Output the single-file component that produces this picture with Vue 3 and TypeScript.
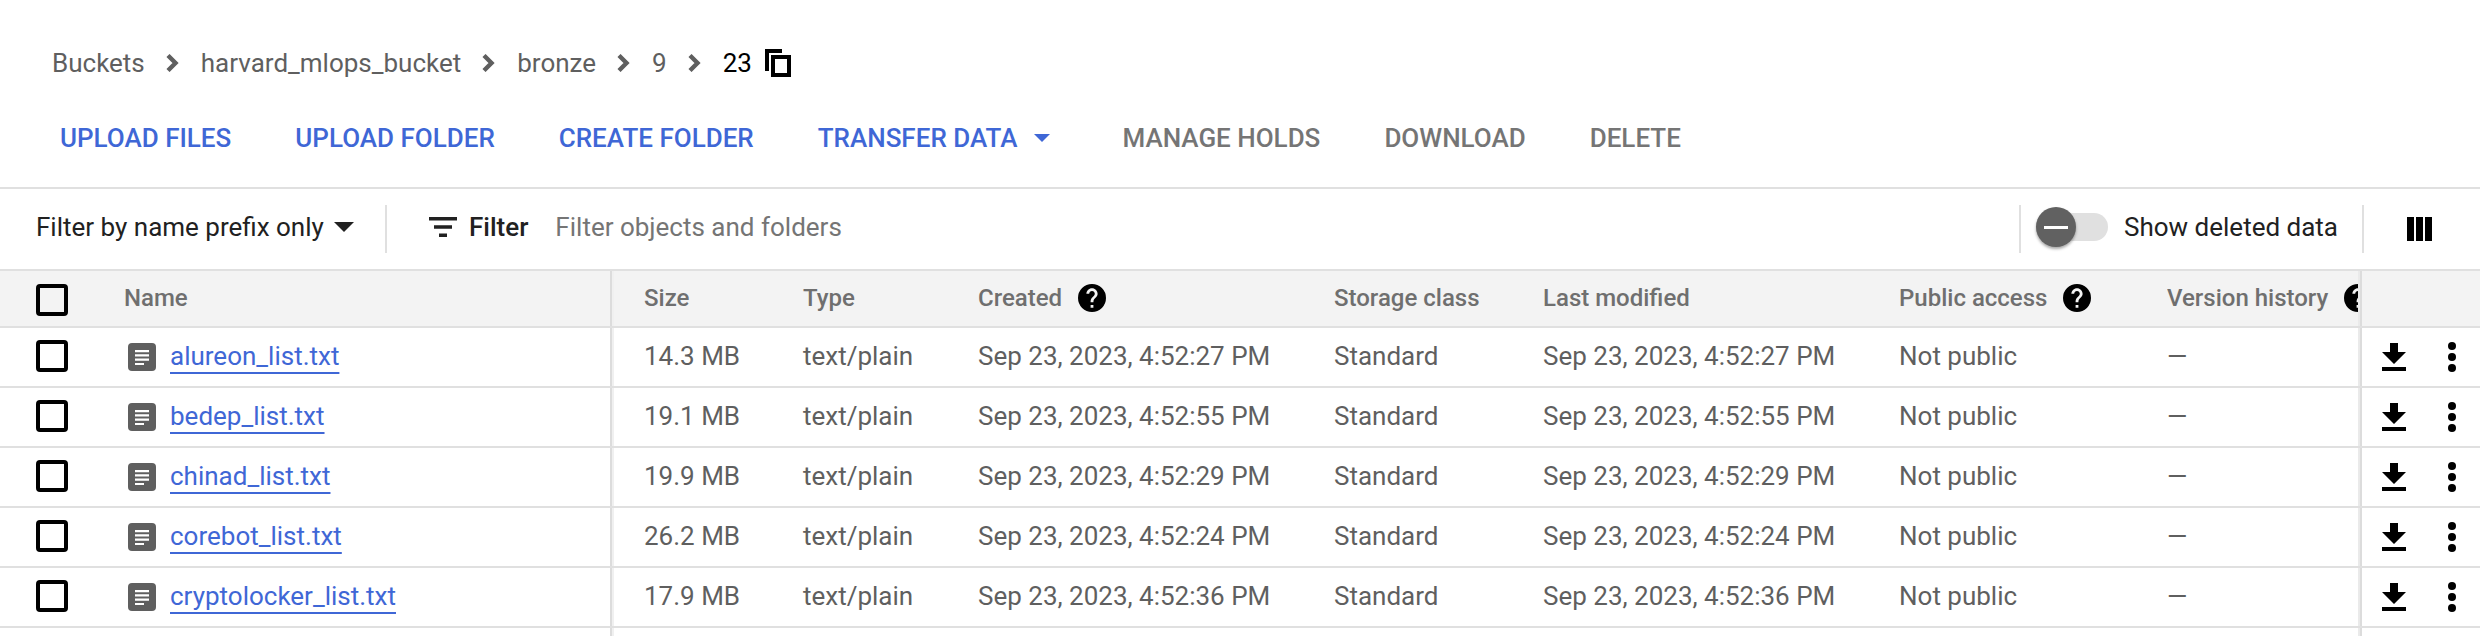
<script setup lang="ts">
interface FileRow { name: string; size: string; date: string }
const rows: FileRow[] = [
  { name: 'alureon_list.txt', size: '14.3 MB', date: 'Sep 23, 2023, 4:52:27 PM' },
  { name: 'bedep_list.txt', size: '19.1 MB', date: 'Sep 23, 2023, 4:52:55 PM' },
  { name: 'chinad_list.txt', size: '19.9 MB', date: 'Sep 23, 2023, 4:52:29 PM' },
  { name: 'corebot_list.txt', size: '26.2 MB', date: 'Sep 23, 2023, 4:52:24 PM' },
  { name: 'cryptolocker_list.txt', size: '17.9 MB', date: 'Sep 23, 2023, 4:52:36 PM' },
]
const crumbs = ['Buckets', 'harvard_mlops_bucket', 'bronze', '9']
const helpPath = 'M12 2a10 10 0 1 0 0 20 10 10 0 0 0 0-20zm1 17h-2v-2h2v2zm2.07-7.75-.9.92C13.45 12.9 13 13.5 13 15h-2v-.5c0-1.1.45-2.1 1.17-2.83l1.24-1.26c.37-.36.59-.86.59-1.41 0-1.1-.9-2-2-2s-2 .9-2 2H8c0-2.21 1.79-4 4-4s4 1.79 4 4c0 .88-.36 1.68-.93 2.25z'
</script>

<template>
  <div class="page">
    <nav class="crumbs">
      <template v-for="c in crumbs" :key="c">
        <span class="crumb">{{ c }}</span>
        <svg class="chev" viewBox="0 0 14 18"><path d="M3 1.500 10.500 9 3 16.500" fill="none" stroke="#5f5f5f" stroke-width="4.400" /></svg>
      </template>
      <span class="crumb current">23</span>
      <svg class="copy" viewBox="0 0 26 28"><path d="M2 22V2h15M8 8h16v18H8z" fill="none" stroke="#000" stroke-width="4" /></svg>
    </nav>

    <div class="actions">
      <button class="act blue">UPLOAD FILES</button>
      <button class="act blue">UPLOAD FOLDER</button>
      <button class="act blue">CREATE FOLDER</button>
      <button class="act blue transfer">TRANSFER DATA<span class="caret"></span></button>
      <button class="act grey manage">MANAGE HOLDS</button>
      <button class="act grey">DOWNLOAD</button>
      <button class="act grey">DELETE</button>
    </div>

    <div class="filters">
      <div class="prefix">Filter by name prefix only<span class="caret dark"></span></div>
      <div class="filter-main">
        <svg class="filter-ic" viewBox="0 0 28 20"><path d="M0 0h28v3.400H0zM5 8.300h18v3.400H5zM10 16.600h8V20h-8z" fill="#212121" /></svg>
        <strong>Filter</strong>
        <span class="placeholder">Filter objects and folders</span>
      </div>
      <div class="deleted">
        <span class="track"><span class="knob"><i></i></span></span>
        <span>Show deleted data</span>
      </div>
      <div class="col-btn">
        <svg viewBox="0 0 25 24"><path d="M0 0h7v24H0zM9 0h7v24H9zM18 0h7v24h-7z" fill="#000" /></svg>
      </div>
    </div>

    <div class="table">
      <div class="row head">
        <div class="cell check"><span class="box"></span></div>
        <div class="cell">Name</div>
        <div class="cell sep">Size</div>
        <div class="cell">Type</div>
        <div class="cell">Created<svg class="help" viewBox="2 2 20 20"><path :d="helpPath" fill="#000" /></svg></div>
        <div class="cell">Storage class</div>
        <div class="cell">Last modified</div>
        <div class="cell">Public access<svg class="help" viewBox="2 2 20 20"><path :d="helpPath" fill="#000" /></svg></div>
        <div class="cell clip">Version history<svg class="help" viewBox="2 2 20 20"><path :d="helpPath" fill="#000" /></svg></div>
        <div class="cell stick"></div>
      </div>
      <div v-for="r in rows" :key="r.name" class="row">
        <div class="cell check"><span class="box"></span></div>
        <div class="cell file">
          <svg class="doc" viewBox="0 0 28 28"><rect width="28" height="28" rx="4" fill="#5f5f5f" /><path d="M7 7h14v2.200H7zM7 11.300h14v2.200H7zM7 15.600h14v2.200H7zM7 19.900h9v2.200H7z" fill="#fff" /></svg>
          <a class="link">{{ r.name }}</a>
        </div>
        <div class="cell sep">{{ r.size }}</div>
        <div class="cell">text/plain</div>
        <div class="cell">{{ r.date }}</div>
        <div class="cell">Standard</div>
        <div class="cell">{{ r.date }}</div>
        <div class="cell">Not public</div>
        <div class="cell">—</div>
        <div class="cell stick tools">
          <svg class="dl" viewBox="0 0 24 28"><path d="M8 0h8v9h8L12 21 0 9h8zM0 24h24v4H0z" fill="#000" /></svg>
          <svg class="dots" viewBox="0 0 8 30"><circle cx="4" cy="4" r="4" /><circle cx="4" cy="15" r="4" /><circle cx="4" cy="26" r="4" /></svg>
        </div>
      </div>
      <div class="row blank">
        <div class="cell"></div><div class="cell"></div><div class="cell sep"></div><div class="cell"></div><div class="cell"></div><div class="cell"></div><div class="cell"></div><div class="cell"></div><div class="cell"></div><div class="cell stick"></div>
      </div>
    </div>
  </div>
</template>

<style scoped>
.page { width: 2480px; height: 636px; overflow: hidden; background: #fff; font-family: Roboto, "Liberation Sans", sans-serif; font-size: 26px; color: #5f5f5f; }
.crumbs { height: 112px; padding: 14px 0 0 52px; box-sizing: border-box; display: flex; align-items: center; }
.crumb { color: #5f5f5f; }
.current { color: #000; }
.chev { width: 14px; height: 18px; margin: 0 22px 0 20px; flex: none; }
.copy { width: 26px; height: 28px; margin-left: 13px; flex: none; }
.actions { height: 77px; padding: 0 0 24px 60px; box-sizing: border-box; display: flex; align-items: center; gap: 64px; border-bottom: 2px solid #e0e0e0; }
.act { border: 0; background: none; padding: 0; font: 500 26px Roboto, sans-serif; display: flex; align-items: center; }
.blue { color: #3f67d6; }
.grey { color: #757575; }
.caret { width: 0; height: 0; border-left: 8px solid transparent; border-right: 8px solid transparent; border-top: 8px solid #3f67d6; margin-left: 17px; }
.caret.dark { border-left-width: 10px; border-right-width: 10px; border-top: 10px solid #212121; margin-left: 10px; }
.manage { margin-left: 8px; }
.filters { height: 80px; display: flex; align-items: center; color: #000; }
.prefix { display: flex; align-items: center; width: 387px; height: 48px; padding: 0 0 4px 36px; box-sizing: border-box; border-right: 2px solid #e0e0e0; color: #212121; }
.filter-main { display: flex; align-items: center; flex: 1; padding: 0 0 4px 42px; }
.filter-ic { width: 28px; height: 20px; margin-right: 12px; }
.filter-main strong { font-weight: 500; color: #212121; }
.placeholder { color: #757575; margin-left: 27px; }
.deleted { width: 343px; height: 48px; box-sizing: border-box; display: flex; align-items: center; padding: 0 0 4px 15px; border-left: 2px solid #e0e0e0; gap: 16px; color: #212121; }
.track { width: 72px; height: 28px; border-radius: 14px; background: #e0e0e0; position: relative; flex: none; }
.knob { position: absolute; left: 0; top: -6px; width: 40px; height: 40px; border-radius: 50%; background: #616161; box-shadow: 0 2px 3px rgba(0,0,0,.35); display: flex; align-items: center; justify-content: center; }
.knob i { width: 24px; height: 3px; background: #fff; }
.col-btn { width: 118px; height: 48px; box-sizing: border-box; border-left: 2px solid #e0e0e0; display: flex; align-items: center; padding-left: 43px; }
.col-btn svg { width: 25px; height: 24px; }
.row { display: grid; grid-template-columns: 124px 486px 193px 175px 356px 209px 356px 268px 193px 120px; height: 60px; box-sizing: border-box; border-bottom: 2px solid #e0e0e0; }
.head { height: 59px; background: #f3f3f3; border-top: 2px solid #e0e0e0; font-size: 24px; font-weight: 500; color: #6f6f6f; }
.blank { border-bottom: 0; }
.cell { display: flex; align-items: center; min-width: 0; white-space: nowrap; padding-bottom: 3px; box-sizing: border-box; }
.head .cell { padding-bottom: 1px; }
.check { padding: 0 0 2px 36px; }
.head .check { padding: 2px 0 0 36px; }
.box { width: 32px; height: 32px; box-sizing: border-box; border: 4.500px solid #000; border-radius: 4px; display: block; }
.sep { padding-left: 32px; border-left: 2px solid #dcdcdc; box-shadow: inset 2px 0 0 #f0f0f0; }
.clip { overflow: hidden; }
.help { width: 28px; height: 28px; margin-left: 16px; flex: none; }
.file { padding: 0 0 0 4px; }
.doc { width: 28px; height: 28px; flex: none; margin-right: 14px; }
.link { color: #3f67d6; margin-bottom: 3px; text-decoration: underline; text-decoration-thickness: 2px; text-underline-offset: 7px; text-decoration-skip-ink: none; }
.stick { border-left: 2px solid #dcdcdc; box-shadow: -2px 0 0 #eaeaea; }
.tools { padding: 0 0 0 20px; }
.dl { width: 24px; height: 28px; flex: none; }
.dots { width: 8px; height: 30px; margin-left: 42px; flex: none; }
</style>
